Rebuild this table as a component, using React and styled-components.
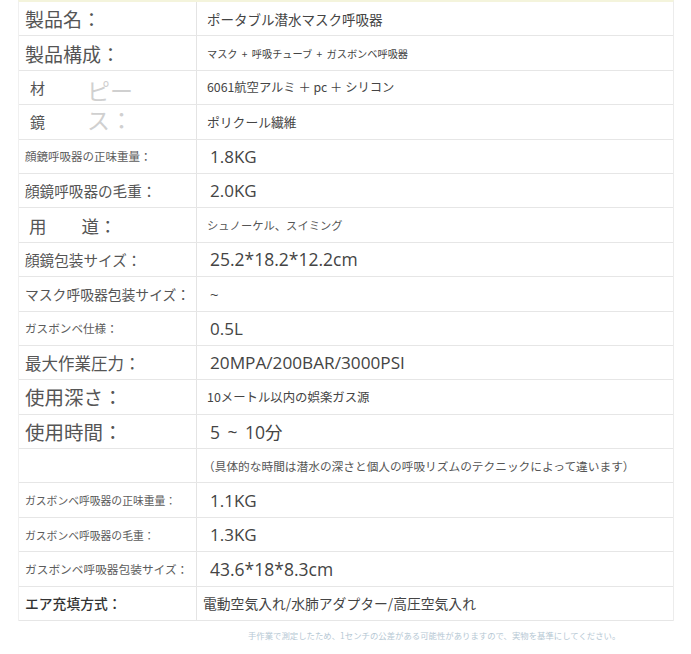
import React from "react";
import styled, { createGlobalStyle } from "styled-components";

const Global = createGlobalStyle`
  html, body { margin: 0; padding: 0; background: #fff; }
  body { font-family: "Noto Sans CJK JP", "Noto Sans", sans-serif; }
`;

const Page = styled.div`
  width: 691px;
  height: 654px;
  background: #fff;
  padding-left: 18px;
  box-sizing: border-box;
`;

const Table = styled.div`
  width: 656px;
  border-top: 2px solid #f4f4dc;
  border-left: 1px solid #f0f0f0;
  border-right: 1px solid #ececec;
  box-sizing: border-box;
`;

const Row = styled.div`
  display: grid;
  grid-template-columns: 178px 1fr;
  height: 34.4px;
  border-bottom: 1px solid #e6e6e6;
  box-sizing: border-box;
`;

const Label = styled.div`
  position: relative;
  display: flex;
  align-items: center;
  padding-left: ${(p) => p.$pad ?? 6}px;
  border-right: 1px solid #e4e4e4;
  font-size: ${(p) => p.$size}px;
  color: ${(p) => p.$color || "#555"};
  font-weight: ${(p) => p.$weight || 400};
  white-space: nowrap;
`;

/* light text that wraps over two rows, across the row border */
const Ghost = styled.div`
  position: absolute;
  left: 68px;
  top: 5px;
  width: 60px;
  font-size: 23px;
  line-height: 29px;
  color: #d0d0d0;
  white-space: pre;
  pointer-events: none;
`;

const Value = styled.div`
  display: flex;
  align-items: center;
  padding-left: ${(p) => p.$pad ?? 10}px;
  font-size: ${(p) => p.$size}px;
  color: ${(p) => p.$color || "#444"};
  font-family: ${(p) =>
    p.$num ? `"Open Sans", "Noto Sans CJK JP", sans-serif` : `"Noto Sans CJK JP", sans-serif`};
  white-space: pre;
  word-spacing: ${(p) => p.$ws || 0}px;
`;

const Note = styled.div`
  padding: 8px 0 0 230px;
  font-size: 8.4px;
  color: #b6c8d4;
  white-space: nowrap;
`;

const rows = [
  { label: "製品名：", ls: 19, value: "ポータブル潜水マスク呼吸器", vs: 13.5 },
  { label: "製品構成：", ls: 19, value: "マスク + 呼吸チューブ + ガスボンベ呼吸器", vs: 10.2, ws: 2 },
  { label: "材", ls: 15, pad: 11, ghost: "ピー\nス：", value: "6061航空アルミ ＋ pc ＋ シリコン", vs: 12.3 },
  { label: "鏡", ls: 15, pad: 11, value: "ポリクール繊維", vs: 12.8 },
  { label: "顔鏡呼吸器の正味重量：", ls: 11.5, lc: "#5c5c5c", value: "1.8KG", vs: 17, num: true, vp: 13 },
  { label: "顔鏡呼吸器の毛重：", ls: 14.6, value: "2.0KG", vs: 17, num: true, vp: 13 },
  { label: "用　　道：", ls: 17.5, pad: 10, value: "シュノーケル、スイミング", vs: 11.3, vc: "#555" },
  { label: "顔鏡包装サイズ：", ls: 14.6, value: "25.2*18.2*12.2cm", vs: 17.5, num: true, vp: 13 },
  { label: "マスク呼吸器包装サイズ：", ls: 13.8, value: "~", vs: 15, num: true, vp: 13 },
  { label: "ガスボンベ仕様：", ls: 11.6, lc: "#5c5c5c", value: "0.5L", vs: 17, num: true, vp: 13 },
  { label: "最大作業圧力：", ls: 16.5, value: "20MPA/200BAR/3000PSI", vs: 17.2, num: true, vp: 13 },
  { label: "使用深さ：", ls: 19.5, value: "10メートル以内の娯楽ガス源", vs: 12.4 },
  { label: "使用時間：", ls: 19.5, value: "5 ~ 10分", vs: 17.5, num: true, vp: 13, ws: 3 },
  { label: "", ls: 12, value: "（具体的な時間は潜水の深さと個人の呼吸リズムのテクニックによって違います）", vs: 11.7, vp: 6, vc: "#555" },
  { label: "ガスボンベ呼吸器の正味重量：", ls: 10.8, lc: "#5c5c5c", value: "1.1KG", vs: 17, num: true, vp: 13 },
  { label: "ガスボンベ呼吸器の毛重：", ls: 10.8, lc: "#5c5c5c", value: "1.3KG", vs: 17, num: true, vp: 13 },
  { label: "ガスボンベ呼吸器包装サイズ：", ls: 11.7, lc: "#5c5c5c", value: "43.6*18*8.3cm", vs: 17.5, num: true, vp: 13 },
  { label: "エア充填方式：", ls: 13.8, lc: "#333", lw: 500, value: "電動空気入れ/水肺アダプター/高圧空気入れ", vs: 13.8, vp: 6 },
];

export default function App() {
  return (
    <Page>
      <Global />
      <Table>
        {rows.map((r, i) => (
          <Row key={i}>
            <Label $size={r.ls} $color={r.lc} $weight={r.lw} $pad={r.pad}>
              {r.label}
              {r.ghost && <Ghost>{r.ghost}</Ghost>}
            </Label>
            <Value $size={r.vs} $num={r.num} $pad={r.vp} $color={r.vc} $ws={r.ws}>
              {r.value}
            </Value>
          </Row>
        ))}
      </Table>
      <Note>手作業で測定したため、1センチの公差がある可能性がありますので、実物を基準にしてください。</Note>
    </Page>
  );
}
